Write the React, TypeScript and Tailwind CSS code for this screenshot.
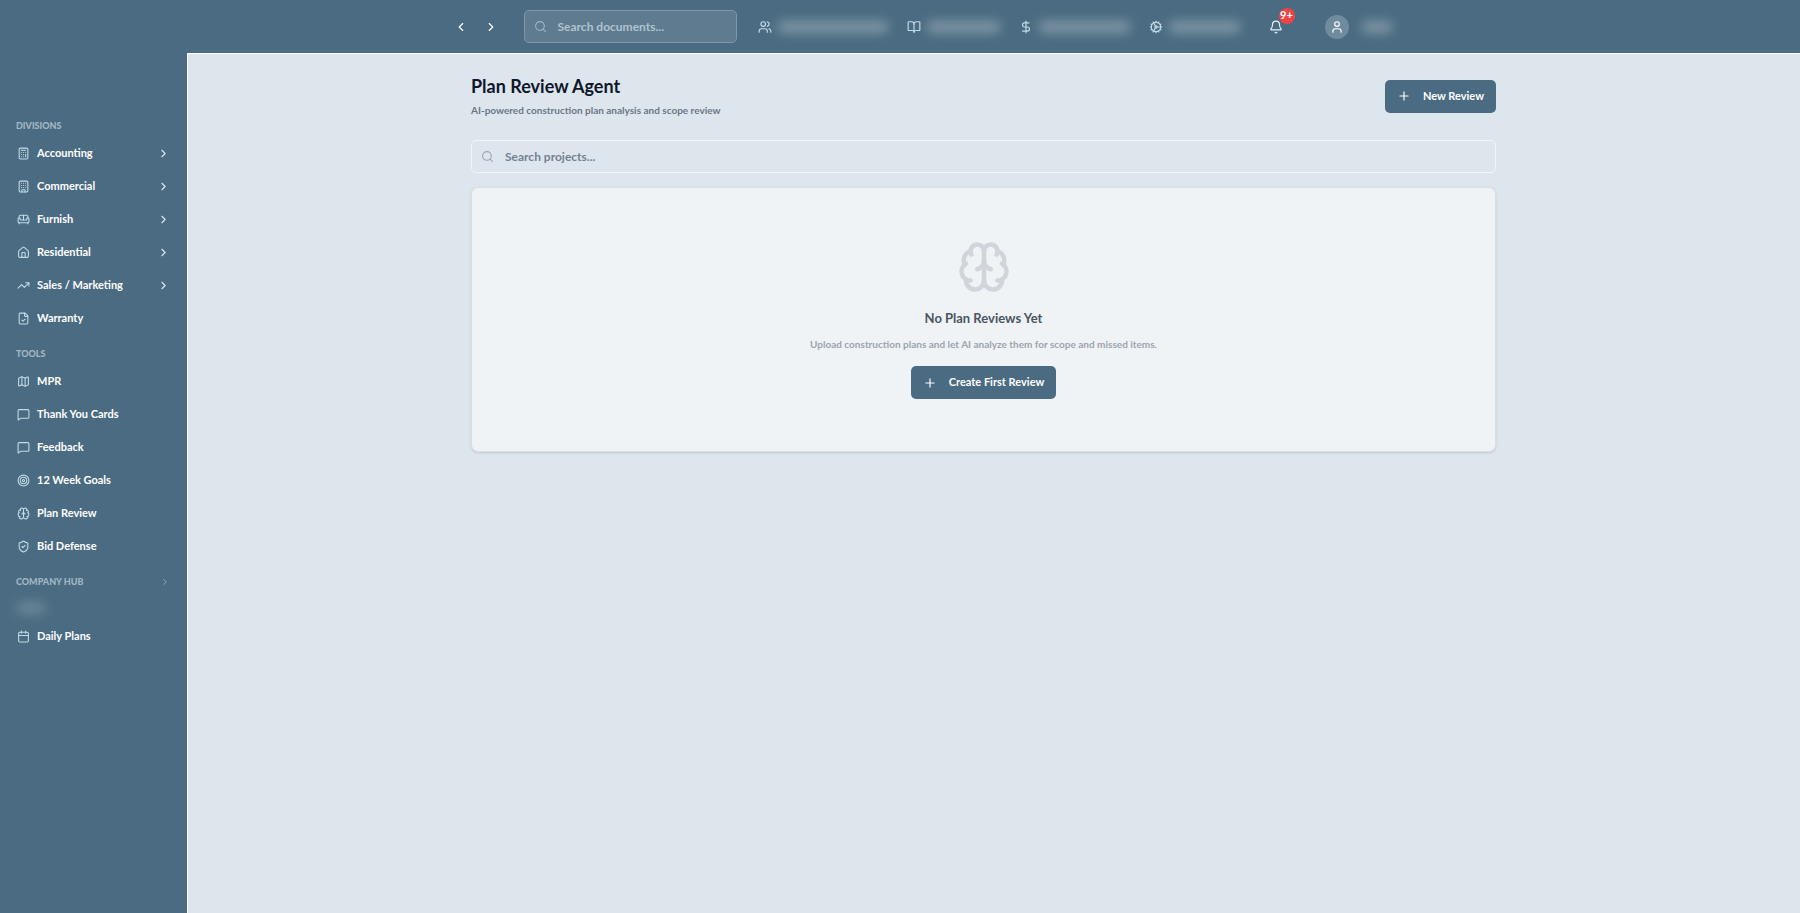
import React from 'react';
import {
  Bell,
  BookOpen,
  Brain,
  Building,
  Calculator,
  Calendar,
  ChevronLeft,
  ChevronRight,
  Cog,
  DollarSign,
  FileCheck,
  House,
  LucideIcon,
  Map,
  MessageSquare,
  Plus,
  Search,
  ShieldCheck,
  Sofa,
  Target,
  TrendingUp,
  User,
  Users,
} from 'lucide-react';

interface NavItem {
  label: string;
  icon: LucideIcon;
  expandable?: boolean;
}

const divisions: NavItem[] = [
  { label: 'Accounting', icon: Calculator, expandable: true },
  { label: 'Commercial', icon: Building, expandable: true },
  { label: 'Furnish', icon: Sofa, expandable: true },
  { label: 'Residential', icon: House, expandable: true },
  { label: 'Sales / Marketing', icon: TrendingUp, expandable: true },
  { label: 'Warranty', icon: FileCheck },
];

const tools: NavItem[] = [
  { label: 'MPR', icon: Map },
  { label: 'Thank You Cards', icon: MessageSquare },
  { label: 'Feedback', icon: MessageSquare },
  { label: '12 Week Goals', icon: Target },
  { label: 'Plan Review', icon: Brain },
  { label: 'Bid Defense', icon: ShieldCheck },
];

const quickLinks = [
  { id: 'team', icon: Users, bar: 'w-[112px]' },
  { id: 'library', icon: BookOpen, bar: 'w-[75px]' },
  { id: 'finance', icon: DollarSign, bar: 'w-[93px]' },
  { id: 'system', icon: Cog, bar: 'w-[73px]' },
];

function NavLink({ label, icon: Icon, expandable }: NavItem) {
  return (
    <li>
      <a href="#" className="flex h-8 items-center gap-[7px] px-[17px] text-[11px] font-bold text-white">
        <Icon className="h-[13px] w-[13px] text-[#c3dbe8]" />
        <span className="flex-1 whitespace-nowrap">{label}</span>
        {expandable && <ChevronRight className="h-[13px] w-[13px] text-[#dbe9f1]" />}
      </a>
    </li>
  );
}

function NavSection({ title, items }: { title: string; items: NavItem[] }) {
  return (
    <section className="mb-[10px]">
      <h2 className="flex h-5 items-center pl-4 text-[9px] font-black text-[#a3b7c4]">{title}</h2>
      <ul className="mt-px flex flex-col gap-px">
        {items.map((item) => (
          <NavLink key={item.label} {...item} />
        ))}
      </ul>
    </section>
  );
}

function Header() {
  return (
    <header className="flex h-[53px] items-center justify-center bg-[#4a6b81] pl-[38px]">
      <div className="flex items-center">
        <button aria-label="Back" className="p-2 text-white">
          <ChevronLeft className="h-[14px] w-[14px]" />
        </button>
        <button aria-label="Forward" className="p-2 text-white">
          <ChevronRight className="h-[14px] w-[14px]" />
        </button>
      </div>

      <label className="ml-[18px] flex h-[33px] w-[213px] items-center gap-[11px] rounded-[5px] border border-[#7f98a9] bg-[#5f7b90] px-[9px]">
        <Search className="h-[13px] w-[13px] text-[#a3b8c6]" />
        <input
          type="text"
          aria-label="Search documents"
          placeholder="Search documents..."
          className="min-w-0 flex-1 bg-transparent text-xs font-bold text-white outline-none placeholder:text-[#b1c2cf]"
        />
      </label>

      <nav className="ml-[21px] flex items-center gap-[18px]">
        {quickLinks.map(({ id, icon: Icon, bar }) => (
          <a key={id} href="#" aria-label={id} className="flex items-center gap-[5px] text-[#c3dbe8]">
            <Icon className="h-[14px] w-[14px]" />
            <span className={`h-3 ${bar} rounded-full bg-white/30 blur-[6px]`} />
          </a>
        ))}
      </nav>

      <button aria-label="Notifications" className="relative ml-5 p-2 text-[#e6f0f6]">
        <Bell className="h-[14px] w-[14px]" />
        <span className="absolute right-[-4px] top-[-4px] flex h-4 w-4 items-center justify-center rounded-full bg-[#ef4444] text-[11px] font-bold text-white">
          9+
        </span>
      </button>

      <button aria-label="Account" className="ml-[34px] flex items-center gap-3">
        <span className="flex h-6 w-6 items-center justify-center rounded-full bg-[#718b9e] text-white">
          <User className="h-[14px] w-[14px]" />
        </span>
        <span className="h-3 w-8 rounded-full bg-white/30 blur-[6px]" />
      </button>
    </header>
  );
}

function Sidebar() {
  return (
    <aside className="w-[187px] shrink-0 bg-[#4a6b81] pt-[63px]">
      <NavSection title="DIVISIONS" items={divisions} />
      <NavSection title="TOOLS" items={tools} />

      <section>
        <h2 className="flex h-5 items-center justify-between pl-4 pr-[17px] text-[9px] font-black text-[#a3b7c4]">
          COMPANY HUB
          <ChevronRight className="h-[10px] w-[10px]" />
        </h2>
        <div className="flex h-7 items-end pb-[6px] pl-4">
          <span className="h-3 w-[30px] rounded-full bg-white/20 blur-[6px]" />
        </div>
        <ul>
          <NavLink label="Daily Plans" icon={Calendar} />
        </ul>
      </section>
    </aside>
  );
}

function PrimaryButton({ children }: { children: React.ReactNode }) {
  return (
    <button className="flex h-[33px] items-center gap-3 rounded-[5px] bg-[#4a6b81] px-3 text-[11px] font-bold text-white">
      <Plus className="h-[14px] w-[14px]" />
      {children}
    </button>
  );
}

export default function App() {
  return (
    <div className="flex min-h-screen flex-col bg-[#dee6ed] font-[Lato,sans-serif]">
      <Header />

      <div className="flex flex-1">
        <Sidebar />

        <main className="flex-1 border-l border-t border-white pr-[21px] pt-[18px]">
          <div className="mx-auto max-w-[1025px]">
            <div className="flex items-center justify-between">
              <div>
                <h1 className="text-lg leading-7 font-bold text-[#0f172a]">Plan Review Agent</h1>
                <p className="text-[10px] leading-5 font-bold text-[#6b7684]">
                  AI-powered construction plan analysis and scope review
                </p>
              </div>
              <PrimaryButton>New Review</PrimaryButton>
            </div>

            <label className="mt-5 flex h-[33px] items-center gap-[11px] rounded-[5px] border border-[#f1f5f9] px-[9px]">
              <Search className="h-[13px] w-[13px] text-[#9ca3af]" />
              <input
                type="text"
                aria-label="Search projects"
                placeholder="Search projects..."
                className="min-w-0 flex-1 bg-transparent text-xs font-bold text-[#0f172a] outline-none placeholder:text-[#748190]"
              />
            </label>

            <section className="mt-[14px] flex flex-col items-center rounded-[7px] border border-[#dadfe4] bg-[#eff3f6] py-[52px] shadow-sm">
              <Brain className="h-[54px] w-[54px] text-[#d1d5db]" />
              <h2 className="mt-3 text-[13px] leading-6 font-bold text-[#4b5563]">No Plan Reviews Yet</h2>
              <p className="mb-3 mt-1 text-[10px] leading-5 font-bold text-[#9ca3af]">
                Upload construction plans and let AI analyze them for scope and missed items.
              </p>
              <PrimaryButton>Create First Review</PrimaryButton>
            </section>
          </div>
        </main>
      </div>
    </div>
  );
}
